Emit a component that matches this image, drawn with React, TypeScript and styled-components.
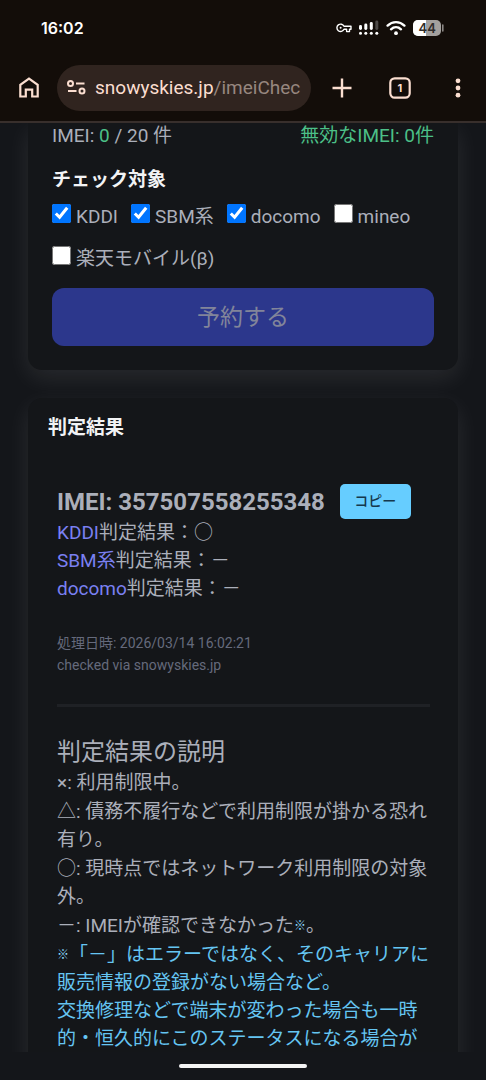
import React from "react";
import styled, { createGlobalStyle } from "styled-components";

const Global = createGlobalStyle`
  *, *::before, *::after { box-sizing: border-box; }
  body {
    margin: 0;
    background: #14161a;
    font-family: Roboto, "Noto Sans CJK JP", sans-serif;
    font-size: 19px;
    line-height: 28px;
    color: #abafba;
  }
  h2, h3, p, ul { margin: 0; padding: 0; font-weight: 400; }
  button { font-family: inherit; border: 0; padding: 0; cursor: pointer; }
`;

const Screen = styled.div`
  display: flex;
  flex-direction: column;
  height: 100vh;
`;

const Chrome = styled.header`
  background: #130d09;
  border-bottom: 2px solid #382f2c;
`;

const StatusBar = styled.div`
  display: flex;
  align-items: center;
  justify-content: space-between;
  height: 56px;
  padding: 0 41px;
`;

const Clock = styled.time`
  font: 600 16px/20px Inter, sans-serif;
  color: #fff;
`;

const StatusIcons = styled.div`
  display: flex;
  align-items: center;
  gap: 7px;
`;

const Toolbar = styled.nav`
  display: flex;
  align-items: center;
  height: 65px;
  padding: 0 16px 2px;
`;

const IconButton = styled.button`
  display: grid;
  place-items: center;
  width: 25px;
  height: 46px;
  background: none;
  color: #fbded0;
`;

const Address = styled.button`
  flex: 1;
  display: flex;
  align-items: center;
  gap: 9px;
  min-width: 0;
  height: 46px;
  margin: 0 18px 0 16px;
  padding: 0 11px 0 10px;
  overflow: hidden;
  border-radius: 23px;
  background: #30241f;
  color: #fbded0;
  font-size: 19px;
  white-space: nowrap;

  svg { flex: none; }
`;

const Path = styled.span`
  color: #97877f;
`;

const Actions = styled.div`
  display: flex;
  gap: 33px;
`;

const Page = styled.main`
  flex: 1;
  min-height: 0;
  overflow: hidden;
  padding: 0 28px;
  display: flex;
  flex-direction: column;
  gap: 28px;
`;

const Card = styled.section<{ $continued?: boolean }>`
  flex: none;
  border-radius: ${(p) => (p.$continued ? "0 0 14px 14px" : "14px")};
  padding: ${(p) => (p.$continued ? "0 24px 24px" : "16px 20px 24px")};
  background: #141619;
  box-shadow: 0 8px 24px rgba(255, 255, 255, 0.09);
`;

const Counts = styled.div`
  display: flex;
  justify-content: space-between;
  line-height: 26px;
`;

const Good = styled.span`
  color: #4cc088;
`;

const CardTitle = styled.h2<{ $spaced?: boolean }>`
  font-size: 19px;
  font-weight: 700;
  color: #f2f3f5;
  margin-top: ${(p) => (p.$spaced ? "17px" : "0")};
`;

const Targets = styled.div`
  display: flex;
  flex-wrap: wrap;
  gap: 14px 13px;
  margin-top: 9px;
`;

const Target = styled.label`
  display: flex;
  align-items: flex-start;
  gap: 5px;
`;

const Tick = styled.input`
  width: 19px;
  height: 19px;
  margin: 1px 0 0;
`;

const Reserve = styled.button`
  width: 100%;
  height: 58px;
  margin-top: 15px;
  padding-bottom: 4px;
  border-radius: 12px;
  background: #2c378c;
  color: #82859a;
  font-size: 23px;
`;

const Result = styled.div`
  padding: 42px 8px 0 9px;
`;

const ImeiRow = styled.div`
  display: flex;
  align-items: center;
  gap: 15px;
`;

const Imei = styled.h3`
  font-size: 24px;
  font-weight: 700;
`;

const Copy = styled.button`
  width: 71px;
  height: 35px;
  padding-bottom: 4px;
  border-radius: 5px;
  background: #66cdff;
  color: #15384d;
  font-size: 14px;
  font-weight: 500;
`;

const Lines = styled.ul<{ $gap?: number }>`
  list-style: none;
  display: flex;
  flex-direction: column;
  gap: ${(p) => p.$gap ?? 0}px;
`;

const Carrier = styled.a`
  color: #7a80f2;
  text-decoration: none;
`;

const Meta = styled.p`
  margin-top: 29px;
  font-size: 14px;
  line-height: 22px;
  color: #656a7c;
`;

const Divider = styled.hr`
  height: 3px;
  margin: 28px 0;
  border: 0;
  background: #1f2125;
`;

const Explain = styled.h3`
  font-size: 24px;
  line-height: 34px;
`;

const Note = styled.span`
  color: #65c5f2;
`;

const Mark = styled.span`
  font-family: "Noto Sans CJK JP", sans-serif;
  font-size: 12px;
  font-weight: 900;
  vertical-align: 2px;
  line-height: 1;
  color: #8fdcff;
`;

const GestureBar = styled.footer`
  display: flex;
  justify-content: center;
  padding: 12px 0;
  background: #14161a;

  &::before {
    content: "";
    width: 128px;
    height: 4px;
    border-radius: 2px;
    background: #f4f4f4;
  }
`;

const KeyIcon = () => (
  <svg width="16" height="10" viewBox="0 0 16 10" fill="none" stroke="#fff" strokeWidth="1.4" strokeLinejoin="round">
    <path d="M8 3.3H15V6.3H13.5V8.6H10.6V6.3H8A3.7 3.7 0 1 1 8 3.3Z" />
    <circle cx="4.6" cy="4.8" r="1" fill="#fff" stroke="none" />
  </svg>
);

const SignalIcon = () => (
  <svg width="20" height="16" viewBox="0 0 20 16" fill="#fff">
    <rect x="0" y="5" width="3" height="5" rx="1.4" />
    <rect x="5.3" y="3.5" width="3" height="6.5" rx="1.4" />
    <rect x="10.8" y="2" width="3" height="8" rx="1.4" />
    <rect x="16.3" y="0.5" width="3" height="9.5" rx="1.4" fill="#4e4a48" />
    <circle cx="1.5" cy="13.3" r="1.5" />
    <circle cx="6.8" cy="13.3" r="1.5" />
    <circle cx="12.3" cy="13.3" r="1.5" />
    <circle cx="17.8" cy="13.3" r="1.5" />
  </svg>
);

const WifiIcon = () => (
  <svg width="20" height="16" viewBox="0 0 20 16" fill="none" stroke="#fff" strokeWidth="2.4" strokeLinecap="round">
    <path d="M1.6 5.6C6.4 1 13.6 1 18.4 5.6" />
    <path d="M5 9.3C7.9 6.6 12.1 6.6 15 9.3" />
    <circle cx="10" cy="13.2" r="1.9" fill="#fff" stroke="none" />
  </svg>
);

const BatteryIcon = () => (
  <svg width="32" height="16" viewBox="0 0 32 16">
    <rect width="28" height="16" rx="5" fill="#a3a09e" />
    <path d="M5 0H13V16H5A5 5 0 0 1 0 11V5A5 5 0 0 1 5 0Z" fill="#fff" />
    <path d="M29.8 5V11" stroke="#8b8785" strokeWidth="1.6" strokeLinecap="round" />
    <text x="14.2" y="13" textAnchor="middle" fontFamily="Inter, sans-serif" fontSize="13" fontWeight="600" fill="#2f2c2a">44</text>
  </svg>
);

const HomeIcon = () => (
  <svg width="20" height="22" viewBox="0 0 20 22" fill="none" stroke="currentColor" strokeWidth="2.2">
    <path d="M1.3 19.5V7.8L10 1.5L18.7 7.8V19.5H13.2V12.6H6.8V19.5Z" />
  </svg>
);

const SiteInfoIcon = () => (
  <svg width="19" height="15" viewBox="0 0 19 15" fill="none" stroke="currentColor" strokeWidth="2">
    <circle cx="3.5" cy="3.5" r="2.5" />
    <path d="M9 3.5H17.5M1 11H9.5" />
    <circle cx="15" cy="11" r="2.5" />
  </svg>
);

const PlusIcon = () => (
  <svg width="20" height="20" viewBox="0 0 20 20" stroke="currentColor" strokeWidth="2.4">
    <path d="M10 0.5V19.5M0.5 10H19.5" />
  </svg>
);

const TabsIcon = () => (
  <svg width="22" height="22" viewBox="0 0 22 22">
    <rect x="1.3" y="1.3" width="19.4" height="19.4" rx="4.4" fill="none" stroke="currentColor" strokeWidth="2.2" />
    <text x="10.8" y="15" textAnchor="middle" fontFamily="Inter, sans-serif" fontSize="11" fontWeight="700" fill="currentColor">1</text>
  </svg>
);

const MoreIcon = () => (
  <svg width="6" height="20" viewBox="0 0 6 20" fill="currentColor">
    <circle cx="3" cy="2.8" r="2.4" />
    <circle cx="3" cy="10" r="2.4" />
    <circle cx="3" cy="17.2" r="2.4" />
  </svg>
);

const targets = [
  { name: "KDDI", on: true },
  { name: "SBM系", on: true },
  { name: "docomo", on: true },
  { name: "mineo", on: false },
  { name: "楽天モバイル(β)", on: false },
];

const results = [
  { carrier: "KDDI", value: "○" },
  { carrier: "SBM系", value: "－" },
  { carrier: "docomo", value: "－" },
];

export default function App() {
  return (
    <Screen>
      <Global />
      <Chrome>
        <StatusBar>
          <Clock>16:02</Clock>
          <StatusIcons>
            <KeyIcon />
            <SignalIcon />
            <WifiIcon />
            <BatteryIcon />
          </StatusIcons>
        </StatusBar>
        <Toolbar>
          <IconButton aria-label="ホーム"><HomeIcon /></IconButton>
          <Address>
            <SiteInfoIcon />
            <span>snowyskies.jp<Path>/imeiChec</Path></span>
          </Address>
          <Actions>
            <IconButton aria-label="新しいタブ"><PlusIcon /></IconButton>
            <IconButton aria-label="タブ一覧"><TabsIcon /></IconButton>
            <IconButton aria-label="メニュー"><MoreIcon /></IconButton>
          </Actions>
        </Toolbar>
      </Chrome>

      <Page>
        <Card $continued>
          <Counts>
            <span>IMEI: <Good>0</Good> / 20 件</span>
            <Good>無効なIMEI: 0件</Good>
          </Counts>
          <CardTitle $spaced>チェック対象</CardTitle>
          <Targets>
            {targets.map((t) => (
              <Target key={t.name}>
                <Tick type="checkbox" defaultChecked={t.on} />
                {t.name}
              </Target>
            ))}
          </Targets>
          <Reserve>予約する</Reserve>
        </Card>

        <Card>
          <CardTitle>判定結果</CardTitle>
          <Result>
            <ImeiRow>
              <Imei>IMEI: 357507558255348</Imei>
              <Copy>コピー</Copy>
            </ImeiRow>
            <Lines>
              {results.map((r) => (
                <li key={r.carrier}>
                  <Carrier href="#">{r.carrier}</Carrier>判定結果：{r.value}
                </li>
              ))}
            </Lines>
            <Meta>
              処理日時: 2026/03/14 16:02:21
              <br />
              checked via snowyskies.jp
            </Meta>
            <Divider />
            <Explain>判定結果の説明</Explain>
            <Lines $gap={1}>
              <li>×: 利用制限中。</li>
              <li>△: 債務不履行などで利用制限が掛かる恐れ有り。</li>
              <li>○: 現時点ではネットワーク利用制限の対象外。</li>
              <li>－: IMEIが確認できなかった<Mark>※</Mark>。</li>
              <li>
                <Mark>※</Mark>
                <Note>「－」はエラーではなく、そのキャリアに販売情報の登録がない場合など。</Note>
                <br />
                <Note>交換修理などで端末が変わった場合も一時的・恒久的にこのステータスになる場合があります。</Note>
              </li>
            </Lines>
          </Result>
        </Card>
      </Page>
      <GestureBar />
    </Screen>
  );
}
